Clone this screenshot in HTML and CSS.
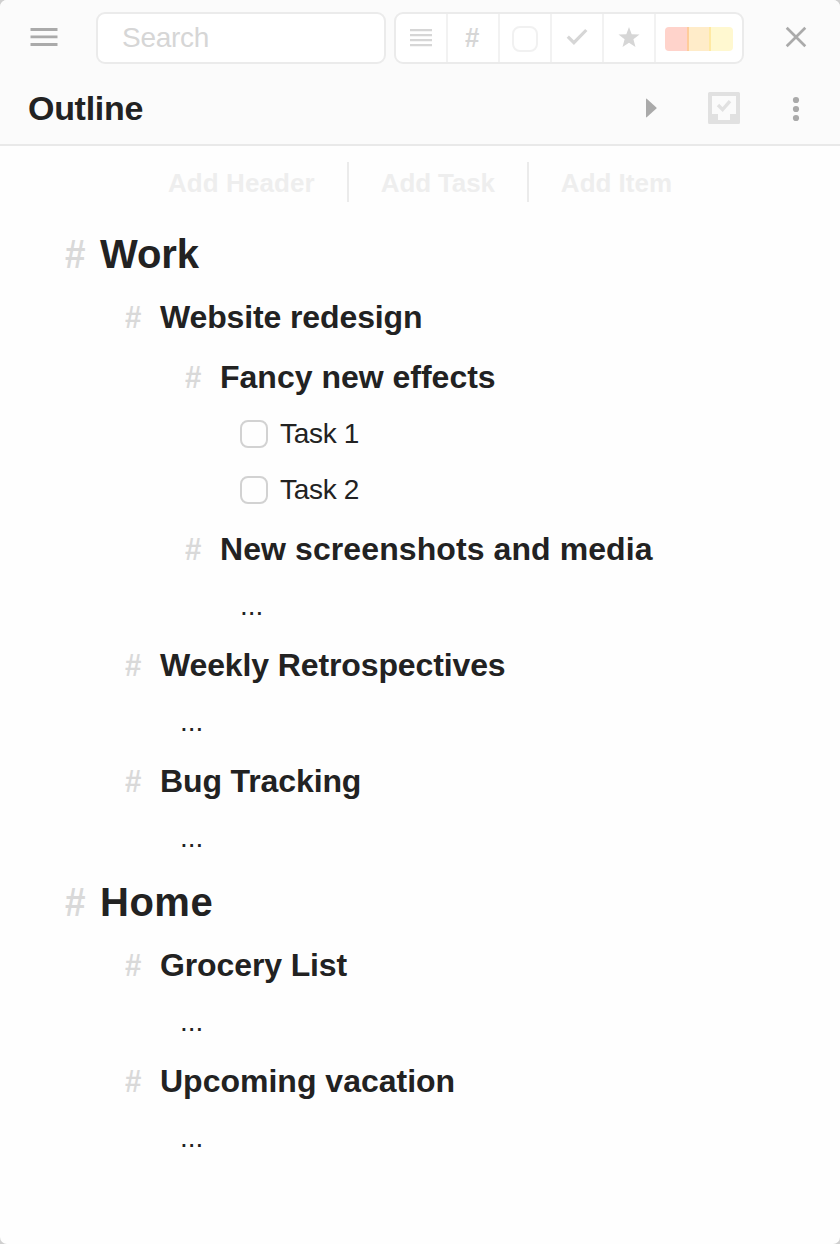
FILE: index.html
```html
<!DOCTYPE html>
<html lang="en">
<head>
<meta charset="utf-8">
<title>Outline</title>
<link rel="stylesheet" href="styles.css">
</head>
<body>
<div class="window">
  <header class="header">
    <div class="toolbar">
      <button class="icon-btn menu" aria-label="Menu"><svg width="28" height="18" viewBox="0 0 28 18" fill="#aaa"><path d="M.5 0h27v3H.5zM.5 7.6h27v2.6H.5zM.5 15h27v3H.5z"/></svg></button>
      <div class="search">Search</div>
      <div class="filters">
        <button class="filter" aria-label="Text"><svg width="24" height="18" viewBox="0 0 24 18" fill="#d6d6d6"><path d="M1 0h22v2.3H1zM1 5h22v2.3H1zM1 10h22v2.3H1zM1 15h22v2.3H1z"/></svg></button>
        <button class="filter filter-hash"><span class="narrow">#</span></button>
        <button class="filter" aria-label="Tasks"><span class="box"></span></button>
        <button class="filter raised" aria-label="Done"><svg width="22" height="18" viewBox="0 0 22 18" fill="none" stroke="#d6d6d6" stroke-width="3.2"><path d="M1.8 8.7l6.1 6L20.3 2"/></svg></button>
        <button class="filter raised" aria-label="Starred"><svg width="22" height="21" viewBox="0 0 22 21" fill="#d6d6d6"><path d="M11 0l2.7 7.2 7.8.3-6.1 4.8 2.1 7.7L11 15.7 4.5 20l2.1-7.7L.5 7.5l7.8-.3z"/></svg></button>
        <button class="filter filter-colors" aria-label="Colors"><span class="swatch red"></span><span class="swatch orange"></span><span class="swatch yellow"></span></button>
      </div>
      <button class="icon-btn close" aria-label="Close"><svg width="22" height="22" viewBox="0 0 22 22" fill="none" stroke="#aaa" stroke-width="2.7"><path d="M1.7 1.7l18.6 18.6M20.3 1.7L1.7 20.3"/></svg></button>
    </div>
    <div class="titlebar">
      <h1 class="title">Outline</h1>
      <div class="actions">
        <svg width="12" height="20" viewBox="0 0 12 20" fill="#aaa"><path d="M1 1.2Q1 0 2 .9l9.4 8.5q.5.6 0 1.2L2 19.1q-1 .8-1-.3z"/></svg>
        <svg width="32" height="32" viewBox="0 0 32 32"><path fill="#e1e1e1" fill-rule="evenodd" d="M1.5 0h29Q32 0 32 1.5v29q0 1.5-1.5 1.5h-29Q0 32 0 30.5v-29Q0 0 1.5 0zM4 4v18h6v6h12v-6h6V4z"/><path d="M10 13l4.6 4.6L22 9.2" fill="none" stroke="#e1e1e1" stroke-width="3.4"/></svg>
        <svg class="dots" width="8" height="28" viewBox="0 0 8 28" fill="#aaa"><circle cx="4" cy="6" r="3.1"/><circle cx="4" cy="15" r="3.1"/><circle cx="4" cy="24" r="3.1"/></svg>
      </div>
    </div>
  </header>
  <nav class="add-bar">
    <button class="add loose">Add Header</button>
    <button class="add tight">Add Task</button>
    <button class="add">Add Item</button>
  </nav>
  <main class="outline">
    <h2 class="row major"><span class="hash"><span class="narrow">#</span></span><span class="tight">Work</span></h2>
    <section class="children">
      <h3 class="row minor"><span class="hash"><span class="narrow">#</span></span><span class="tight">Website redesign</span></h3>
      <section class="children">
        <h3 class="row minor"><span class="hash"><span class="narrow">#</span></span><span>Fancy new effects</span></h3>
        <div class="row task"><span class="checkbox"></span>Task 1</div>
        <div class="row task"><span class="checkbox"></span>Task 2</div>
        <h3 class="row minor"><span class="hash"><span class="narrow">#</span></span><span class="loose">New screenshots and media</span></h3>
        <div class="row more">...</div>
      </section>
      <h3 class="row minor"><span class="hash"><span class="narrow">#</span></span><span class="tight">Weekly Retrospectives</span></h3>
      <div class="row more">...</div>
      <h3 class="row minor"><span class="hash"><span class="narrow">#</span></span><span class="tight">Bug Tracking</span></h3>
      <div class="row more">...</div>
    </section>
    <h2 class="row major"><span class="hash"><span class="narrow">#</span></span><span class="wide">Home</span></h2>
    <section class="children">
      <h3 class="row minor"><span class="hash"><span class="narrow">#</span></span><span class="tight">Grocery List</span></h3>
      <div class="row more">...</div>
      <h3 class="row minor"><span class="hash"><span class="narrow">#</span></span><span>Upcoming vacation</span></h3>
      <div class="row more">...</div>
    </section>
  </main>
</div>
</body>
</html>
```
FILE: styles.css
```css
* { box-sizing: border-box; }
html { background: #cfcfcf; }
body {
  margin: 0;
  font-family: "Liberation Sans", Arial, sans-serif;
  color: #222;
}
button {
  margin: 0;
  padding: 0;
  border: 0;
  background: none;
  font: inherit;
}
svg { display: block; }

.window {
  height: 1244px;
  border-radius: 7px;
  background: #fefefe;
  overflow: hidden;
}

/* Letter fitting */
.tight { letter-spacing: -0.12px; }
.loose { letter-spacing: 0.09px; }
.wide { letter-spacing: 0.5px; }
.narrow {
  display: inline-block;
  transform: scaleX(0.92);
  transform-origin: left center;
}

.header {
  height: 146px;
  border-bottom: 2px solid #e9e9e9;
  background: #fbfbfb;
}
.toolbar {
  display: flex;
  height: 72px;
  padding: 12px 33px 8px 30px;
}
.icon-btn {
  display: flex;
  align-items: center;
  height: 50px;
}
.menu { width: 66px; }
.close { margin-left: auto; }
.search {
  width: 290px;
  height: 52px;
  margin-right: 8px;
  padding-left: 24px;
  border: 2px solid #ebebeb;
  border-radius: 9px;
  background: #fff;
  color: #d6d6d6;
  font-size: 28px;
  letter-spacing: -0.3px;
  line-height: 48px;
}
.filters {
  display: flex;
  width: 350px;
  height: 52px;
  border: 2px solid #ebebeb;
  border-radius: 9px;
  background: #fff;
}
.filter {
  display: flex;
  align-items: center;
  justify-content: center;
  width: 52px;
  height: 48px;
  border-right: 2px solid #f2f2f2;
}
.raised { padding-bottom: 2px; }
.filter-hash {
  color: #d6d6d6;
  font-size: 28px;
  font-weight: bold;
}
.box {
  width: 26px;
  height: 26px;
  margin-top: 2px;
  border: 2px solid #f1f1f1;
  border-radius: 8px;
}
.filter-colors {
  width: 86px;
  border: 0;
  padding-top: 2px;
}
.swatch { height: 24px; }
.red {
  width: 22px;
  border-radius: 4px 0 0 4px;
  background: #ffd3cb;
}
.orange {
  width: 24px;
  border-left: 2px solid #ffcc9b;
  border-right: 2px solid #ffe9a2;
  background: #ffecc9;
}
.yellow {
  width: 22px;
  border-radius: 0 4px 4px 0;
  background: #fff8d0;
}

.titlebar {
  display: flex;
  align-items: center;
  justify-content: space-between;
  height: 72px;
  padding: 0 40px 0 28px;
}
.title {
  margin: 0;
  font-size: 34px;
  letter-spacing: -0.3px;
  line-height: 72px;
}
.actions {
  display: flex;
  align-items: center;
  gap: 51px;
}
.dots { margin-left: 1px; }

.add-bar {
  display: flex;
  justify-content: center;
  height: 73px;
  padding-top: 16px;
}
.add {
  height: 40px;
  padding: 2px 32px 0;
  color: #eee;
  font-size: 26px;
  font-weight: bold;
  line-height: 38px;
}
.add + .add { border-left: 2px solid #ebebeb; }

.outline { padding-left: 60px; }
.children { padding-left: 60px; }
.row {
  display: flex;
  align-items: center;
  margin: 0;
  white-space: pre;
}
.hash {
  width: 40px;
  padding-left: 5px;
  color: #d9d9d9;
}
.major {
  height: 68px;
  padding-top: 2px;
  font-size: 40px;
}
.minor {
  height: 60px;
  font-size: 32px;
}
.task,
.more {
  height: 56px;
  padding: 0 0 2px 60px;
  font-size: 28px;
}
.task { letter-spacing: -0.3px; }
.checkbox {
  width: 28px;
  height: 28px;
  margin-right: 12px;
  border: 2px solid #d2d2d2;
  border-radius: 8px;
}
```
